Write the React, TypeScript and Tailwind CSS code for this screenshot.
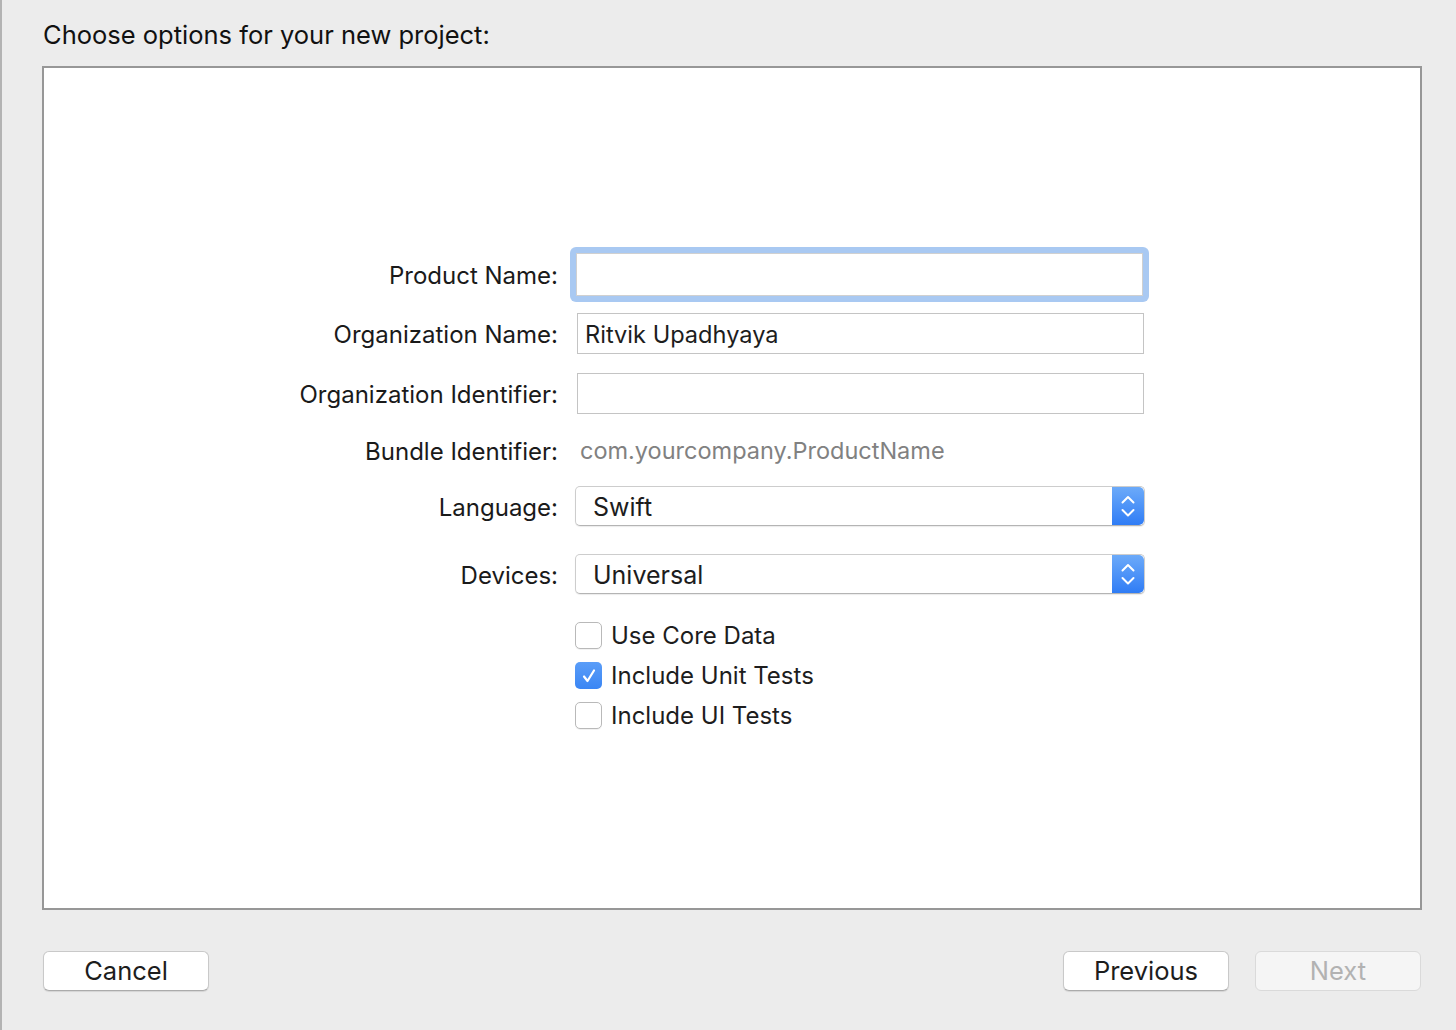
import React, { useState } from 'react';

const font = { fontFamily: 'Inter, "Liberation Sans", sans-serif' };

const Stepper: React.FC = () => (
  <div className="w-[32px] h-full rounded-r-[5px] bg-gradient-to-b from-[#6caaf9] to-[#2f7cf5] flex items-center justify-center">
    <svg width="32" height="40" viewBox="0 0 32 40" fill="none" stroke="white" strokeWidth="2" strokeLinecap="round" strokeLinejoin="round">
      <path d="M10.5 16.5 L16 11 L21.5 16.5" />
      <path d="M10.5 24 L16 29.5 L21.5 24" />
    </svg>
  </div>
);

const Popup: React.FC<{ value: string }> = ({ value }) => (
  <div className="w-[570px] h-[40px] flex rounded-[5px] bg-white border border-[#cdcdcd] border-b-[#b4b4b4] shadow-[0_1px_1px_rgba(0,0,0,0.08)] overflow-hidden">
    <div className="flex-1 flex items-center pl-[17px] pt-[3px] text-[25px] text-[#1d1d1d]">{value}</div>
    <Stepper />
  </div>
);

const Checkbox: React.FC<{ label: string; checked: boolean; onToggle: () => void }> = ({ label, checked, onToggle }) => (
  <button onClick={onToggle} className="flex items-center h-[27px] gap-[9px] text-left">
    {checked ? (
      <span className="w-[27px] h-[27px] rounded-[5px] bg-gradient-to-b from-[#5a9df8] to-[#3a86f4] flex items-center justify-center">
        <svg width="18" height="18" viewBox="0 0 18 18" fill="none" stroke="white" strokeWidth="2.2" strokeLinecap="round" strokeLinejoin="round">
          <path d="M4 9.5 L7.5 14 L14 3.5" />
        </svg>
      </span>
    ) : (
      <span className="w-[27px] h-[27px] rounded-[5px] bg-white border border-[#b9b9b9] shadow-[0_1px_0_rgba(0,0,0,0.05)]" />
    )}
    <span className="text-[24px] text-[#1d1d1d] leading-none">{label}</span>
  </button>
);

const Label: React.FC<{ children: React.ReactNode }> = ({ children }) => (
  <div className="w-[514px] pt-[3px] text-right text-[24px] text-[#1a1a1a]">{children}</div>
);

const App: React.FC = () => {
  const [coreData, setCoreData] = useState(false);
  const [unitTests, setUnitTests] = useState(true);
  const [uiTests, setUiTests] = useState(false);

  return (
    <div style={font} className="w-[1456px] h-[1030px] bg-[#ececec] border-l-2 border-[#b3b3b3] flex flex-col overflow-hidden">
      <div className="h-[66px] pl-[41px] pt-[18px] text-[25.5px] text-[#111] leading-[34px]">Choose options for your new project:</div>

      <div className="ml-[40px] w-[1380px] h-[844px] bg-white border-2 border-[#979797] flex flex-col">
        {/* Product Name (focused) */}
        <div className="mt-[185px] flex items-center h-[43px]">
          <Label>Product Name:</Label>
          <div className="ml-[12px] rounded-[6px] bg-[#a9c9f2] p-[6px] -my-[6px]">
            <div className="w-[567px] h-[43px] bg-white border border-[#d0d0d0]" />
          </div>
        </div>

        <div className="mt-[17px] flex items-center h-[41px]">
          <Label>Organization Name:</Label>
          <div className="ml-[19px] w-[567px] h-[41px] bg-white border border-[#c4c4c4] flex items-center pl-[7px] pt-[3px] text-[23.6px] text-[#1d1d1d]">
            Ritvik Upadhyaya
          </div>
        </div>

        <div className="mt-[19px] flex items-center h-[41px]">
          <Label>Organization Identifier:</Label>
          <div className="ml-[19px] w-[567px] h-[41px] bg-white border border-[#c4c4c4]" />
        </div>

        <div className="mt-[21px] flex items-center h-[30px]">
          <Label>Bundle Identifier:</Label>
          <div className="ml-[22px] pt-[2px] text-[23.5px] text-[#818181]">com.yourcompany.ProductName</div>
        </div>

        <div className="mt-[21px] flex items-center h-[40px]">
          <Label>Language:</Label>
          <div className="ml-[17px]"><Popup value="Swift" /></div>
        </div>

        <div className="mt-[28px] flex items-center h-[40px]">
          <Label>Devices:</Label>
          <div className="ml-[17px]"><Popup value="Universal" /></div>
        </div>

        <div className="mt-[28px] ml-[531px] flex flex-col gap-[13px]">
          <Checkbox label="Use Core Data" checked={coreData} onToggle={() => setCoreData(!coreData)} />
          <Checkbox label="Include Unit Tests" checked={unitTests} onToggle={() => setUnitTests(!unitTests)} />
          <Checkbox label="Include UI Tests" checked={uiTests} onToggle={() => setUiTests(!uiTests)} />
        </div>
      </div>

      <div className="mt-[41px] ml-[41px] w-[1378px] flex items-center">
        <button className="w-[166px] h-[40px] rounded-[6px] bg-white border border-[#c9c9c9] border-b-[#ababab] shadow-[0_1px_1px_rgba(0,0,0,0.1)] text-[25.5px] text-[#1d1d1d]">
          Cancel
        </button>
        <div className="flex-1" />
        <button className="w-[166px] h-[40px] rounded-[6px] bg-white border border-[#c9c9c9] border-b-[#ababab] shadow-[0_1px_1px_rgba(0,0,0,0.1)] text-[25.5px] text-[#1d1d1d]">
          Previous
        </button>
        <button disabled className="ml-[26px] w-[166px] h-[40px] rounded-[6px] bg-[#f5f5f5] border border-[#dadada] text-[25.5px] text-[#b2b2b2]">
          Next
        </button>
      </div>
    </div>
  );
};

export default App;
